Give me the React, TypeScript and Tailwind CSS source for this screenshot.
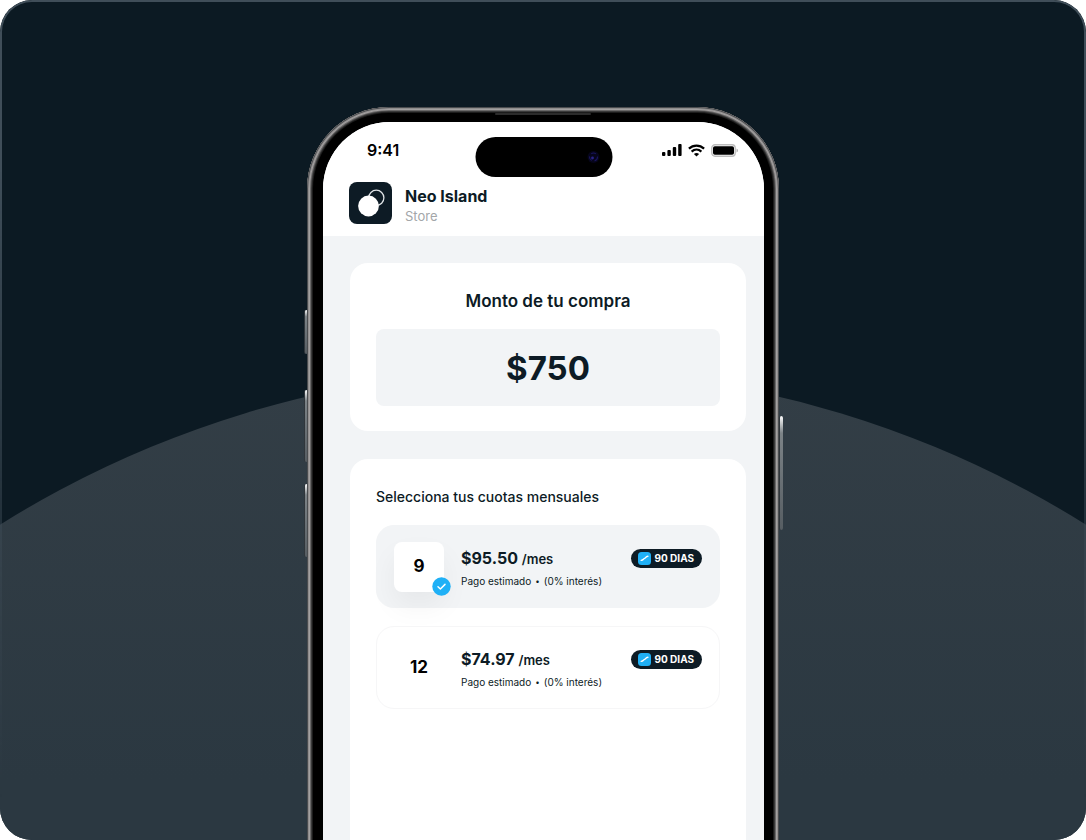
import { useState } from "react";

interface Plan {
    months: number;
    price: string;
}

const plans: Plan[] = [
    { months: 9, price: "$95.50" },
    { months: 12, price: "$74.97" },
];

const SignalIcon = () => (
    <svg width="20" height="12" viewBox="0 0 20 12" fill="currentColor">
        <rect x="0" y="8" width="3.4" height="4" rx="1" />
        <rect x="5.4" y="6" width="3.4" height="6" rx="1" />
        <rect x="10.8" y="3" width="3.4" height="9" rx="1" />
        <rect x="16.2" y="0" width="3.4" height="12" rx="1" />
    </svg>
);

const WifiIcon = () => (
    <svg width="17" height="13" viewBox="0 0 17 13" fill="none" stroke="currentColor" strokeWidth="2.2">
        <path d="M.9 4.6C5.2 .5 11.8 .5 16.1 4.6" />
        <path d="M3.6 7.6C6.5 4.9 10.5 4.9 13.4 7.6" />
        <path d="M8.5 12.6 5.9 10Q8.5 7.8 11.1 10Z" fill="currentColor" stroke="none" />
    </svg>
);

const BatteryIcon = () => (
    <svg width="27" height="13" viewBox="0 0 27 13">
        <rect x=".8" y=".8" width="23.4" height="11.4" rx="3.2" fill="none" stroke="#bdbdbd" strokeWidth="1.4" />
        <rect x="2" y="2.2" width="21" height="8.6" rx="1.8" fill="#000" />
        <path d="M25.5 4.5q1.5 .7 1.5 2t-1.5 2z" fill="#b4b4b4" />
    </svg>
);

const StoreLogo = () => (
    <svg width="43" height="42" viewBox="0 0 43 42">
        <rect width="43" height="42" rx="8" fill="#0d1b25" />
        <circle cx="27.3" cy="15.8" r="7.6" fill="none" stroke="#dfe3e6" strokeWidth="1.3" />
        <circle cx="19.5" cy="24" r="10.4" fill="#fff" />
    </svg>
);

const StatusBar = () => (
    <div className="flex h-14 items-center justify-between pr-[26px] pl-11 text-black">
        <span className="text-base font-semibold">9:41</span>
        <div className="flex items-center gap-1.5">
            <SignalIcon />
            <WifiIcon />
            <BatteryIcon />
        </div>
    </div>
);

const DynamicIsland = () => (
    <div className="absolute top-[15px] left-1/2 flex h-10 w-[137px] -translate-x-1/2 items-center justify-end rounded-full bg-black pr-3">
        <svg width="14" height="14" viewBox="0 0 14 14">
            <circle cx="7" cy="7" r="6" fill="#06051a" />
            <circle cx="7" cy="7" r="4" fill="none" stroke="#18145a" strokeWidth="1.2" strokeDasharray="5 3" />
            <circle cx="6" cy="8" r="1.4" fill="#2a2388" />
        </svg>
    </div>
);

const Badge = () => (
    <span className="flex h-[19px] items-center gap-1 rounded-full bg-[#0d1b25] pr-2 pl-[7px] text-[10px] font-bold text-white">
        <svg width="13" height="13" viewBox="0 0 13 13">
            <rect width="13" height="13" rx="3.5" fill="#1fb0f6" />
            <path d="M3.2 8.4c2-.3 2-1.2 3.2-1.9s1.6-1.9 3.5-2.2" fill="none" stroke="#fff" strokeWidth="1.4" strokeLinecap="round" />
        </svg>
        90 DIAS
    </span>
);

interface PlanOptionProps extends Plan {
    selected: boolean;
    onSelect: () => void;
}

const PlanOption = ({ months, price, selected, onSelect }: PlanOptionProps) => (
    <label
        className={`flex h-[83px] cursor-pointer items-start rounded-[18px] border px-[17px] pt-4 ${
            selected ? "border-[#f2f4f6] bg-[#f2f4f6]" : "border-[#f6f6f7]"
        }`}
    >
        <input
            type="radio"
            name="plan"
            className="sr-only"
            checked={selected}
            onChange={onSelect}
        />
        <span
            className={`relative flex h-[50px] w-[50px] items-center justify-center rounded-lg text-[17px] font-bold text-black ${
                selected ? "bg-white shadow-[0_14px_28px_rgba(0,0,0,0.05)]" : ""
            }`}
        >
            {months}
            {selected && (
                <svg className="absolute -right-[7px] -bottom-1" width="19" height="19" viewBox="0 0 19 19">
                    <circle cx="9.5" cy="9.5" r="9.2" fill="#1fb0f6" />
                    <path d="m6 9.8 2.4 2.2 4.6-4.6" fill="none" stroke="#fff" strokeWidth="1.5" strokeLinecap="round" strokeLinejoin="round" />
                </svg>
            )}
        </span>
        <span className="ml-[17px] flex flex-1 flex-col pt-1">
            <span className="text-base leading-6 font-bold">
                {price} <span className="text-[13px] font-semibold">/mes</span>
            </span>
            <span className="flex items-center text-[10px] leading-5">
                Pago estimado
                <span className="mx-1 text-[8px]">•</span>
                (0% interés)
            </span>
        </span>
        <span className="pt-[7px]">
            <Badge />
        </span>
    </label>
);

const SideButton = ({ className }: { className: string }) => (
    <div
        className={`absolute w-1 rounded-sm border-l border-[#30363b] bg-linear-to-b from-white via-[#7c8387] via-15% to-[#565d62] ${className}`}
    />
);

export default function App() {
    const [selected, setSelected] = useState(9);

    return (
        <div className="h-screen bg-white font-['Inter',sans-serif] text-[#0d1b25]">
            <main className="relative flex h-full flex-col items-center overflow-hidden rounded-[32px] bg-[#0c1a23] pt-[107px]">
                <div className="absolute top-[369px] left-1/2 size-[2050px] -translate-x-1/2 rounded-full bg-linear-to-b from-[#333e46] to-[#2b3841] to-20%" />
                <div className="pointer-events-none absolute inset-0 rounded-[32px] border-2 border-[#404e59] mask-b-from-20% mask-b-to-95%" />

                {/* the frame runs past the bottom edge, so the phone looks cut off */}
                <div className="relative -mb-2 flex w-[472px] flex-1 flex-col">
                    <SideButton className="top-[203px] -left-[3px] h-11" />
                    <SideButton className="top-[283px] -left-[3px] h-[72px]" />
                    <SideButton className="top-[377px] -left-[3px] h-[73px]" />
                    <SideButton className="top-[309px] -right-1 h-[114px]" />

                    <div className="relative flex flex-1 flex-col rounded-t-[82px] bg-black pt-[15px] pr-[15px] pl-4 shadow-[inset_0_0_0_1px_#4a4c4f,inset_0_0_0_2px_#8f8d8d,inset_0_0_0_3px_#a3a0a0,inset_0_0_0_4px_#6a6969,inset_0_0_0_5px_#3a3a3a,inset_0_0_0_6px_#1c1c1c]">
                        <div className="absolute top-1.5 left-1/2 h-0.5 w-24 -translate-x-1/2 rounded-full bg-[#2c2c2c]" />
                        <div className="relative flex flex-1 flex-col overflow-hidden rounded-t-[67px] bg-[#f2f4f6]">
                            <header className="h-[114px] bg-white">
                                <StatusBar />
                                <div className="flex gap-[13px] px-[26px] pt-1">
                                    <StoreLogo />
                                    <div className="pt-1">
                                        <h1 className="text-base leading-5 font-bold">Neo Island</h1>
                                        <p className="text-[13px] leading-5 text-[#a3a6a9]">Store</p>
                                    </div>
                                </div>
                            </header>
                            <DynamicIsland />

                            <div className="flex flex-1 flex-col gap-7 pt-[27px] pr-[18px] pl-[27px]">
                                <section className="rounded-[18px] bg-white px-[26px] pt-[26px] pb-[25px] text-center">
                                    <label htmlFor="amount" className="block text-[17px] leading-6 font-semibold">
                                        Monto de tu compra
                                    </label>
                                    <input
                                        id="amount"
                                        type="text"
                                        defaultValue="$750"
                                        className="mt-4 block h-[77px] w-full rounded-lg bg-[#f2f4f6] text-center text-[33px] font-bold outline-none"
                                    />
                                </section>

                                <section className="flex-1 rounded-t-[18px] bg-white px-[26px] pt-[26px]">
                                    <h2 className="text-sm leading-6 font-medium">Selecciona tus cuotas mensuales</h2>
                                    <div className="mt-4 flex flex-col gap-[18px]">
                                        {plans.map((plan) => (
                                            <PlanOption
                                                key={plan.months}
                                                {...plan}
                                                selected={plan.months === selected}
                                                onSelect={() => setSelected(plan.months)}
                                            />
                                        ))}
                                    </div>
                                </section>
                            </div>
                        </div>
                    </div>
                </div>
            </main>
        </div>
    );
}
